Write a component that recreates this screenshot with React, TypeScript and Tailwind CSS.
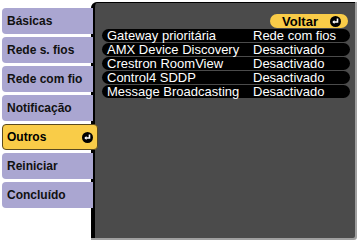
import React from 'react';

const tabs = ['Básicas', 'Rede s. fios', 'Rede com fio', 'Notificação', 'Outros', 'Reiniciar', 'Concluído'];

const rows: [string, string][] = [
  ['Gateway prioritária', 'Rede com fios'],
  ['AMX Device Discovery', 'Desactivado'],
  ['Crestron RoomView', 'Desactivado'],
  ['Control4 SDDP', 'Desactivado'],
  ['Message Broadcasting', 'Desactivado'],
];

const EnterIcon = () => (
  <svg width="11" height="11" viewBox="0 0 11 11">
    <circle cx="5.5" cy="5.5" r="5.5" fill="#000" />
    <path d="M7.5 2.5 V6 H3.5" stroke="#fff" strokeWidth="1.6" fill="none" />
    <path d="M2.3 6 L4.5 4 V8 Z" fill="#fff" />
  </svg>
);

export default function App() {
  return (
    <div
      className="w-[360px] h-[241px] bg-white flex overflow-hidden"
      style={{ fontFamily: '"Liberation Sans", Arial, sans-serif' }}
    >
      <div className="flex flex-col gap-[3px] pt-[8px] pl-[2px] w-[91px] shrink-0 relative z-10">
        {tabs.map((t) =>
          t === 'Outros' ? (
            <div
              key={t}
              className="h-[26px] w-[96px] rounded-[4px] bg-[#f9cc48] border border-[#5a4a20] flex items-center justify-between pl-[4px] pr-[4px] text-[12px] font-bold text-black"
            >
              <span>{t}</span>
              <EnterIcon />
            </div>
          ) : (
            <div
              key={t}
              className="h-[26px] w-[91px] rounded-l-[4px] bg-[#aaa6d1] flex items-center pl-[5px] text-[12px] font-bold text-[#111]"
            >
              {t}
            </div>
          )
        )}
      </div>
      <div className="mt-[2px] w-[264px] h-[236px] shrink-0 bg-[#4b4b4b] border-l-[4px] border-t border-black rounded-tl-[6px] rounded-br-[2px] shadow-[1px_1px_0_1px_#a0a0a0] flex flex-col pt-[11px] pl-[7px] pr-[5px]">
        <div className="flex justify-end pr-[2px]">
          <div className="h-[14px] w-[78px] rounded-full bg-[#f9cc48] flex items-center justify-end gap-[12px] pr-[7px] text-[13px] font-bold text-black leading-none">
            <span>Voltar</span>
            <EnterIcon />
          </div>
        </div>
        <div className="flex flex-col gap-[1px] mt-[1px]">
          {rows.map(([k, v]) => (
            <div key={k} className="h-[13px] rounded-full bg-black flex items-center pl-[5px] text-[13px] text-white leading-none">
              <span className="w-[146px]">{k}</span>
              <span>{v}</span>
            </div>
          ))}
        </div>
      </div>
    </div>
  );
}
